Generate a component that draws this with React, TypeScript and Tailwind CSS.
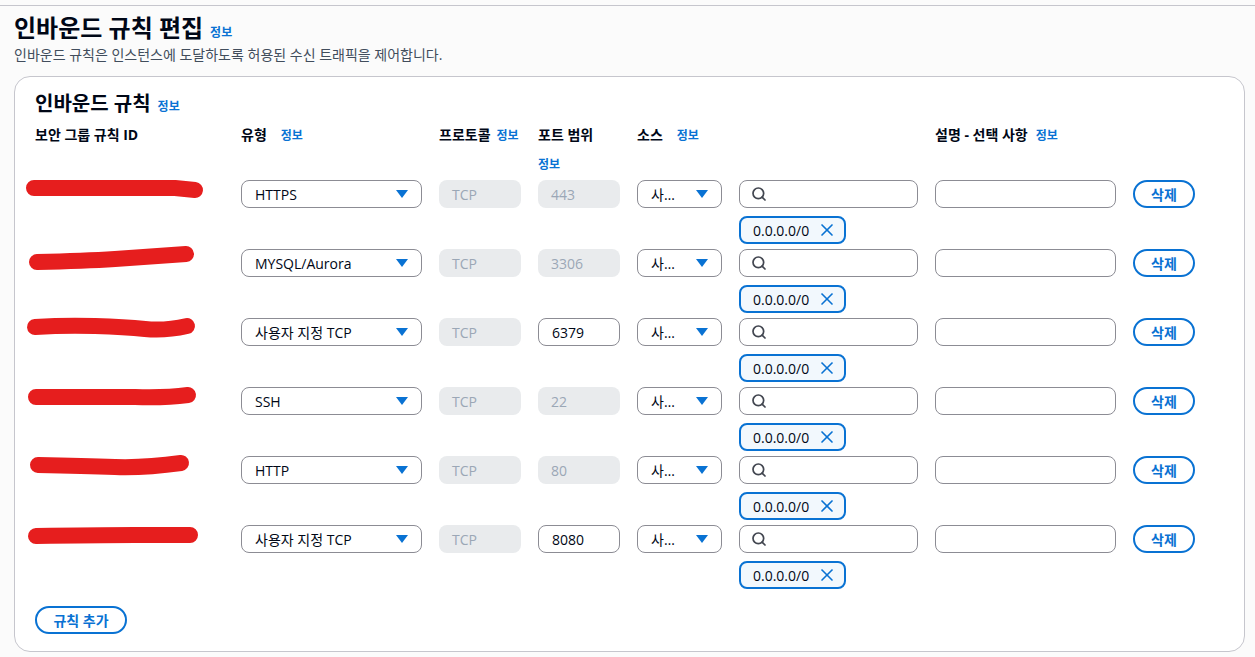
import { Search, X } from 'lucide-react'

interface Rule {
  type: string
  port: string
  portEditable: boolean
  redact: string
}

const rules: Rule[] = [
  { type: 'HTTPS', port: '443', portEditable: false, redact: 'M9 8 L150 8 Q160 9 170 10' },
  { type: 'MYSQL/Aurora', port: '3306', portEditable: false, redact: 'M12 13 Q60 12 90 10 T161 5' },
  { type: '사용자 지정 TCP', port: '6379', portEditable: true, redact: 'M10 9 Q40 7 70 8 T120 11 T162 8' },
  { type: 'SSH', port: '22', portEditable: false, redact: 'M11 10 L110 10 Q140 11 163 8' },
  { type: 'HTTP', port: '80', portEditable: false, redact: 'M13 9 Q60 10 90 11 T156 7' },
  { type: '사용자 지정 TCP', port: '8080', portEditable: true, redact: 'M11 11 Q70 10 110 10 T165 10' },
]

const grid =
  'grid grid-cols-[189px_181px_82px_82px_85px_179px_181px_62px] gap-x-[17px]'

function Info({ className = '' }: { className?: string }) {
  return <span className={`text-[12px] font-bold text-[#0972d3] ${className}`}>정보</span>
}

function Caret() {
  return (
    <svg width="12" height="8" viewBox="0 0 12 8" className="shrink-0">
      <path d="M0 0 H12 L6 8 Z" fill="#0972d3" />
    </svg>
  )
}

function Select({ label }: { label: string }) {
  return (
    <div className="h-[28px] rounded-[8px] border border-[#8c8c94] bg-white flex items-center justify-between pl-[13px] pr-[13px]">
      <span className="truncate text-[14px] text-[#000716]">{label}</span>
      <Caret />
    </div>
  )
}

function Disabled({ value }: { value: string }) {
  return (
    <div className="h-[28px] rounded-[8px] bg-[#e9ebed] flex items-center px-[13px] text-[14px] text-[#9ba7b6]">
      {value}
    </div>
  )
}

function TextBox({ value = '' }: { value?: string }) {
  return (
    <div className="h-[28px] rounded-[8px] border border-[#8c8c94] bg-white flex items-center px-[13px] text-[14px] text-[#000716]">
      {value}
    </div>
  )
}

function RuleRow({ rule }: { rule: Rule }) {
  return (
    <div className={`${grid} items-start`}>
      <div className="relative h-[28px]">
        <svg width="185" height="28" viewBox="0 0 185 28" className="absolute -left-[10px] top-0 overflow-visible">
          <path d={rule.redact} stroke="#e61e1e" strokeWidth="16" strokeLinecap="round" strokeLinejoin="round" fill="none" />
        </svg>
      </div>
      <Select label={rule.type} />
      <Disabled value="TCP" />
      {rule.portEditable ? <TextBox value={rule.port} /> : <Disabled value={rule.port} />}
      <div className="h-[28px] rounded-[8px] border border-[#8c8c94] bg-white flex items-center justify-between pl-[13px] pr-[13px]">
        <span className="text-[14px] text-[#000716]">사…</span>
        <Caret />
      </div>
      <div className="flex flex-col gap-[8px]">
        <div className="h-[28px] rounded-[8px] border border-[#8c8c94] bg-white flex items-center pl-[11px]">
          <Search className="w-[16px] h-[16px] text-[#424650]" strokeWidth={2.6} />
        </div>
        <div className="h-[28px] w-[107px] rounded-[8px] border-2 border-[#0972d3] bg-[#f2f8fd] flex items-center justify-between pl-[12px] pr-[7px]">
          <span className="text-[14px] text-[#000716]">0.0.0.0/0</span>
          <X className="w-[20px] h-[20px] text-[#0972d3]" strokeWidth={2} />
        </div>
      </div>
      <TextBox />
      <button className="h-[28px] rounded-full border-2 border-[#0972d3] bg-white text-[14px] font-bold text-[#0972d3] flex items-center justify-center">
        삭제
      </button>
    </div>
  )
}

export default function App() {
  return (
    <div className="min-h-screen bg-[#fbfbfb] font-['Open_Sans','Noto_Sans_CJK_KR',sans-serif] text-[#000716]">
      <div className="h-[5px]" />
      <div className="border-t border-[#c6c6cd]" />
      <div className="pl-[14px] mt-[7px]">
        <div className="flex items-baseline gap-[7px]">
          <h1 className="text-[24px] leading-[30px] font-bold">인바운드 규칙 편집</h1>
          <Info />
        </div>
        <p className="mt-[2px] text-[14px] leading-[20px] text-[#414d5c]">
          인바운드 규칙은 인스턴스에 도달하도록 허용된 수신 트래픽을 제어합니다.
        </p>
      </div>

      <div className="ml-[14px] mt-[11px] w-[1231px] rounded-[16px] border border-[#c6c6cd] bg-white px-[20px] pt-[15px] pb-[17px]">
        <div className="flex items-baseline gap-[7px]">
          <h2 className="text-[20px] leading-[24px] font-bold">인바운드 규칙</h2>
          <Info />
        </div>

        <div className={`${grid} mt-[8px] text-[14px] leading-[22px] font-bold`}>
          <div>보안 그룹 규칙 ID</div>
          <div className="flex items-baseline gap-[14px]">
            <span>유형</span>
            <Info />
          </div>
          <div className="flex items-baseline gap-[6px] whitespace-nowrap">
            <span>프로토콜</span>
            <Info />
          </div>
          <div className="flex flex-col gap-[8px]">
            <span className="whitespace-nowrap">포트 범위</span>
            <Info className="leading-[22px]" />
          </div>
          <div className="flex items-baseline gap-[14px]">
            <span>소스</span>
            <Info />
          </div>
          <div />
          <div className="flex items-baseline gap-[8px] whitespace-nowrap">
            <span>설명 - 선택 사항</span>
            <Info />
          </div>
          <div />
        </div>

        <div className="mt-[4px] flex flex-col gap-[5px]">
          {rules.map((rule, i) => (
            <RuleRow key={i} rule={rule} />
          ))}
        </div>

        <button className="mt-[17px] h-[28px] w-[92px] rounded-full border-2 border-[#0972d3] bg-white text-[14px] font-bold text-[#0972d3] flex items-center justify-center">
          규칙 추가
        </button>
      </div>
    </div>
  )
}
